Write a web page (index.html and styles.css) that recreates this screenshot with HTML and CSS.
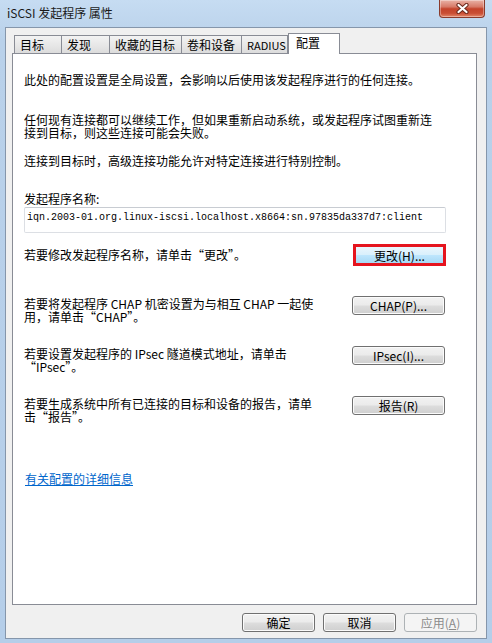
FILE: index.html
```html
<!DOCTYPE html>
<html lang="zh-CN">
<head>
    <meta charset="UTF-8">
    <meta name="viewport" content="width=device-width, initial-scale=1.0">
    <title>iSCSI 发起程序 属性</title>
    <link rel="stylesheet" href="styles.css">
</head>
<body>
    <div class="window">
        <div class="titlebar">
            <span class="title">iSCSI 发起程序 属性</span>
            <button class="close-btn" aria-label="关闭">
                <svg width="13" height="11" viewBox="0 0 13 11">
                    <path d="M2.5 2 L10.5 9 M10.5 2 L2.5 9" stroke="#6b2a1e" stroke-width="4.2" stroke-linecap="round"/>
                    <path d="M2.5 2 L10.5 9 M10.5 2 L2.5 9" stroke="#ffffff" stroke-width="2.2" stroke-linecap="round"/>
                </svg>
            </button>
        </div>

        <div class="client">
            <div class="tabs">
                <div class="tab w48">目标</div>
                <div class="tab w48">发现</div>
                <div class="tab">收藏的目标</div>
                <div class="tab">卷和设备</div>
                <div class="tab">RADIUS</div>
                <div class="tab active">配置</div>
            </div>

            <div class="panel">
                <p class="intro">此处的配置设置是全局设置，会影响以后使用该发起程序进行的任何连接。</p>
                <p class="note">任何现有连接都可以继续工作，但如果重新启动系统，或发起程序试图重新连<br>接到目标，则这些连接可能会失败。</p>
                <p class="note note-last">连接到目标时，高级连接功能允许对特定连接进行特别控制。</p>

                <label class="field-label">发起程序名称:</label>
                <div class="name-box">iqn.2003-01.org.linux-iscsi.localhost.x8664:sn.97835da337d7:client</div>

                <div class="row row-change">
                    <p>若要修改发起程序名称，请单击“更改”。</p>
                    <button class="btn marked">更改(H)...</button>
                </div>

                <div class="row row-chap">
                    <p>若要将发起程序 CHAP 机密设置为与相互 CHAP 一起使<br>用，请单击“CHAP”。</p>
                    <button class="btn">CHAP(P)...</button>
                </div>

                <div class="row">
                    <p>若要设置发起程序的 IPsec 隧道模式地址，请单击<br>“IPsec”。</p>
                    <button class="btn">IPsec(I)...</button>
                </div>

                <div class="row">
                    <p>若要生成系统中所有已连接的目标和设备的报告，请单<br>击“报告”。</p>
                    <button class="btn">报告(R)</button>
                </div>

                <p class="more"><a href="#">有关配置的详细信息</a></p>
            </div>

            <div class="dialog-buttons">
                <button class="btn">确定</button>
                <button class="btn">取消</button>
                <button class="btn" disabled>应用(<u>A</u>)</button>
            </div>
        </div>
    </div>
</body>
</html>
```

FILE: styles.css
```css
* {
    margin: 0;
    padding: 0;
    box-sizing: border-box;
}

body {
    font-family: "Noto Sans CJK SC", "Liberation Sans", sans-serif;
    font-size: 12px;
    color: #000;
    background: #b9d1ea;
}

.window {
    width: 492px;
    height: 643px;
    padding: 0 5px 4px 5px;
    background: linear-gradient(#c6dcf2, #b9d1ea 40px, #b5cee9);
}

.titlebar {
    height: 27px;
    display: flex;
    justify-content: space-between;
    align-items: flex-start;
}

.title {
    margin: 5px 0 0 2px;
    line-height: 16px;
    font-size: 12px;
    color: #1a1a1a;
}

.close-btn {
    width: 46px;
    height: 18px;
    margin-right: 2px;
    border: 1px solid #8a3b2c;
    border-top: none;
    border-radius: 0 0 4px 4px;
    background: linear-gradient(#e9b2a6 0%, #d77a68 40%, #c4432b 52%, #c94e34 78%, #e4876a 100%);
    box-shadow: inset 0 0 0 1px rgba(255, 255, 255, 0.35);
    display: flex;
    align-items: center;
    justify-content: center;
    cursor: pointer;
}

.close-btn svg {
    display: block;
}

.client {
    height: 612px;
    background: #f0f0f0;
    border: 1px solid #8596ab;
}

/* tab strip */
.tabs {
    display: flex;
    align-items: flex-end;
    height: 20px;
    margin: 5px 0 0 8px;
}

.tab {
    height: 18px;
    padding: 2px 5px 0 5px;
    line-height: 14px;
    white-space: nowrap;
    border: 1px solid #898c95;
    border-bottom: none;
    border-left: none;
    background: linear-gradient(#f3f3f3, #e8e8e8 50%, #dcdcdc);
}

.tab:first-child {
    border-left: 1px solid #898c95;
}

.tab.w48 {
    min-width: 48px;
}

.tab:nth-child(3) {
    width: 72px;
}

.tab:nth-child(4) {
    width: 60px;
}

.tab:nth-child(5) {
    width: 46px;
    font-size: 11px;
}

.tab.active {
    position: relative;
    z-index: 1;
    width: 52px;
    height: 21px;
    margin-bottom: -1px;
    padding: 2px 0 0 7px;
    border-left: 1px solid #898c95;
    background: #fff;
}

/* tab page */
.panel {
    height: 552px;
    margin: 0 9px 0 6px;
    padding: 20px 30px 0 11px;
    background: #fff;
    border: 1px solid #898c95;
}

.panel p {
    line-height: 13px;
    white-space: nowrap;
}

.intro {
    margin-top: -1px;
}

.note {
    margin-top: 27px;
}

.note-last {
    margin-top: 15px;
}

.field-label {
    display: block;
    margin-top: 25px;
    line-height: 13px;
}

.name-box {
    height: 26px;
    margin-top: 2px;
    padding: 4px 0 0 2px;
    border: 1px solid #dcdfe4;
    border-top-color: #c8ccd2;
    border-radius: 2px;
    font-family: "Liberation Mono", monospace;
    font-size: 10px;
    line-height: 12px;
    white-space: nowrap;
}

.row {
    display: flex;
    justify-content: space-between;
    align-items: flex-start;
    margin-top: 23px;
}

.row p {
    padding-top: 1px;
}

.row-change {
    margin-top: 11px;
}

.row-change p {
    padding-top: 4px;
}

.row-chap {
    margin-top: 30px;
}

.btn {
    width: 93px;
    height: 19px;
    margin-right: 1px;
    font-family: inherit;
    font-size: 12px;
    line-height: 15px;
    color: #000;
    border: 1px solid #707070;
    border-radius: 3px;
    background: linear-gradient(#f2f2f2 0%, #ebebeb 48%, #dddddd 52%, #cfcfcf 100%);
    box-shadow: inset 0 0 0 1px #fbfbfb;
    cursor: pointer;
}

.btn.marked {
    width: 93px;
    height: 22px;
    margin-right: 0;
    border: 3px solid #e5141e;
    border-radius: 0;
    background: linear-gradient(#eaf6fd 0%, #d9f0fc 48%, #bee6fd 52%, #a7d9f5 100%);
    box-shadow: none;
}

.btn:disabled {
    color: #8b8b8b;
    border-color: #adb2b5;
    background: #f4f4f4;
    box-shadow: none;
}

.more {
    margin-top: 49px;
    padding-left: 1px;
}

.more a {
    color: #0066cc;
    text-decoration: underline;
}

.dialog-buttons {
    display: flex;
    justify-content: flex-end;
    gap: 8px;
    margin-top: 8px;
    padding-right: 9px;
}

.dialog-buttons .btn {
    width: 73px;
    margin-right: 0;
}
```
